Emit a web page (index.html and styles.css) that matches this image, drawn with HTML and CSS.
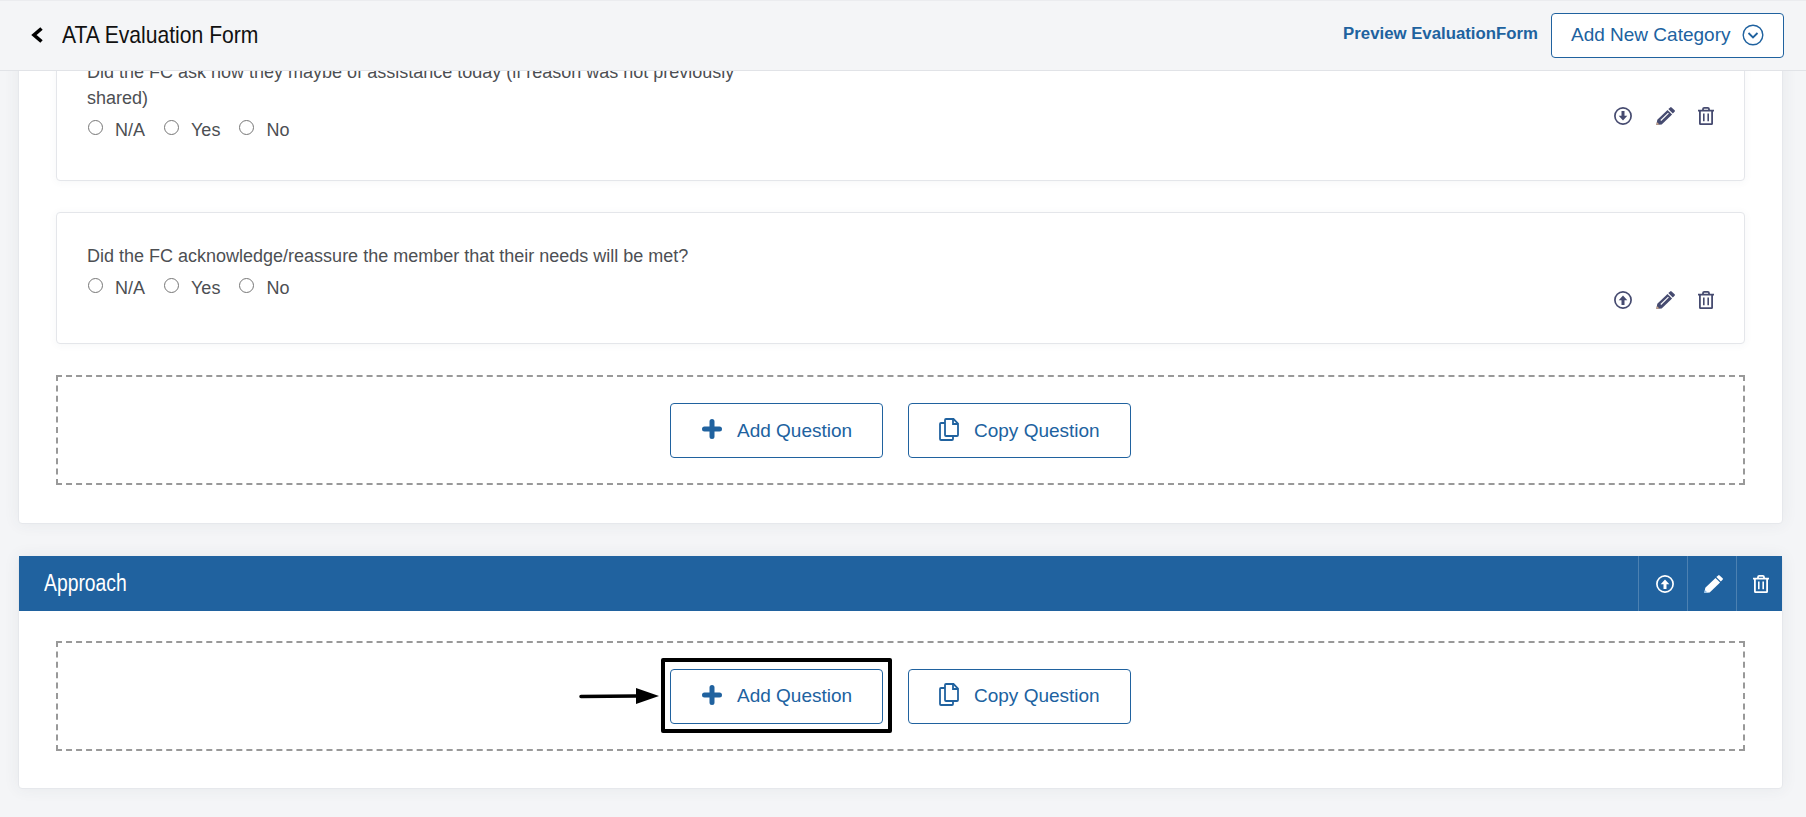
FILE: index.html
```html
<!DOCTYPE html>
<html lang="en">
<head>
<meta charset="utf-8">
<title>ATA Evaluation Form</title>
<link rel="stylesheet" href="styles.css">
</head>
<body>
<svg class="sprite" width="0" height="0" aria-hidden="true">
  <symbol id="i-down" viewBox="0 0 18 18"><circle cx="9" cy="9" r="8.100" fill="none" stroke="currentColor" stroke-width="1.700"/><path d="M7.500 4h3v4.700h2.800L9 13.500 4.700 8.700h2.800z" fill="currentColor"/></symbol>
  <symbol id="i-up" viewBox="0 0 18 18"><circle cx="9" cy="9" r="8.100" fill="none" stroke="currentColor" stroke-width="1.700"/><path d="M7.500 14h3V9.300h2.800L9 4.500 4.700 9.300h2.800z" fill="currentColor"/></symbol>
  <symbol id="i-pencil" viewBox="0 0 19 18"><path d="M14.200.4a1 1 0 0 1 1.400 0l3 2.900a1 1 0 0 1 0 1.400l-1.800 1.800-4.500-4.400z" fill="currentColor"/><path d="M11.500 3l4.600 4.500L5.700 17.500.3 18l1-5.200z" fill="currentColor"/><path d="M12 5.700L4.400 13.100l.8.800 7.600-7.400z" fill="var(--pencil-line)"/><path d="M.3 18l.5-3 2.700 2.600z" fill="var(--pencil-tip)"/></symbol>
  <symbol id="i-trash" viewBox="0 0 16 18"><path d="M0 3.700h16M5 3.500V2a1.200 1.200 0 0 1 1.200-1.100h3.600A1.200 1.200 0 0 1 11 2v1.500M1.900 3.700v12.700c0 .5.400.8.800.8h10.600c.4 0 .8-.3.8-.8V3.700" fill="none" stroke="currentColor" stroke-width="1.800"/><path d="M5.800 6.500v7.800M10.200 6.500v7.800" fill="none" stroke="currentColor" stroke-width="1.600"/></symbol>
  <symbol id="i-plus" viewBox="0 0 20 20"><path d="M10 2.500v15M2.500 10h15" fill="none" stroke="currentColor" stroke-width="5" stroke-linecap="round"/></symbol>
  <symbol id="i-copy" viewBox="0 0 20 23"><path d="M7 1h7.500L19 5.500V17c0 .6-.4 1-1 1H7c-.6 0-1-.4-1-1V2c0-.6.4-1 1-1z" fill="#fff" stroke="currentColor" stroke-width="1.800"/><path d="M14 1v5h5" fill="none" stroke="currentColor" stroke-width="1.800"/><path d="M6 5H2c-.6 0-1 .4-1 1v15c0 .6.400 1 1 1h11c.6 0 1-.4 1-1v-3" fill="none" stroke="currentColor" stroke-width="1.800"/></symbol>
</svg>

<header class="topbar">
  <div class="topbar-left">
    <svg class="back" viewBox="0 0 12 16" aria-hidden="true"><path d="M10.500 1.500L3 8l7.500 6.500" fill="none" stroke="currentColor" stroke-width="3.600"/></svg>
    <h1 class="page-title">ATA Evaluation Form</h1>
  </div>
  <div class="topbar-right">
    <a class="preview-link">Preview EvaluationForm</a>
    <button class="btn btn-category"><span class="btn-category-label">Add New Category</span>
      <svg class="chev" viewBox="0 0 22 22" aria-hidden="true"><circle cx="11" cy="11" r="9.800" fill="none" stroke="currentColor" stroke-width="1.400"/><path d="M6.500 9l4.500 4.500L15.500 9" fill="none" stroke="currentColor" stroke-width="1.800"/></svg>
    </button>
  </div>
</header>

<main class="viewport">
  <div class="form">
    <section class="section">
      <div class="section-body">
        <article class="question question-long">
          <div class="question-main">
            <p class="question-text">Did the FC ask how they maybe of assistance today (if reason was not previously shared)</p>
            <div class="options">
              <label class="option"><input type="radio" name="q1">N/A</label>
              <label class="option"><input type="radio" name="q1">Yes</label>
              <label class="option"><input type="radio" name="q1">No</label>
            </div>
          </div>
          <div class="actions">
            <svg class="ic ic-circle"><use href="#i-down"/></svg>
            <svg class="ic ic-pencil"><use href="#i-pencil"/></svg>
            <svg class="ic ic-trash"><use href="#i-trash"/></svg>
          </div>
        </article>
        <article class="question">
          <div class="question-main">
            <p class="question-text">Did the FC acknowledge/reassure the member that their needs will be met?</p>
            <div class="options">
              <label class="option"><input type="radio" name="q2">N/A</label>
              <label class="option"><input type="radio" name="q2">Yes</label>
              <label class="option"><input type="radio" name="q2">No</label>
            </div>
          </div>
          <div class="actions">
            <svg class="ic ic-circle"><use href="#i-up"/></svg>
            <svg class="ic ic-pencil"><use href="#i-pencil"/></svg>
            <svg class="ic ic-trash"><use href="#i-trash"/></svg>
          </div>
        </article>
        <div class="dropzone dropzone-offset">
          <button class="btn btn-add"><svg class="ic-plus"><use href="#i-plus"/></svg>Add Question</button>
          <button class="btn btn-copy"><svg class="ic-copy"><use href="#i-copy"/></svg>Copy Question</button>
        </div>
      </div>
    </section>

    <section class="section">
      <div class="section-head">
        <h2 class="section-title">Approach</h2>
        <div class="head-actions">
          <span class="head-cell"><svg class="ic ic-circle"><use href="#i-up"/></svg></span>
          <span class="head-cell"><svg class="ic ic-pencil"><use href="#i-pencil"/></svg></span>
          <span class="head-cell"><svg class="ic ic-trash"><use href="#i-trash"/></svg></span>
        </div>
      </div>
      <div class="section-body section-body-compact">
        <div class="dropzone">
          <span class="callout">
            <svg class="callout-arrow" viewBox="0 0 82 20" aria-hidden="true"><path d="M3 10.500L58 10" fill="none" stroke="#000" stroke-width="3.500" stroke-linecap="round"/><path d="M58 2l23 8-23 8z" fill="#000"/></svg>
            <button class="btn btn-add"><svg class="ic-plus"><use href="#i-plus"/></svg>Add Question</button>
          </span>
          <button class="btn btn-copy"><svg class="ic-copy"><use href="#i-copy"/></svg>Copy Question</button>
        </div>
      </div>
    </section>
  </div>
</main>
</body>
</html>
```
FILE: styles.css
```css
* { box-sizing: border-box; }
html, body { height: 100%; }
body {
  margin: 0;
  overflow: hidden;
  background: #f4f5f7;
  font-family: "Liberation Sans", Arial, sans-serif;
  color: #4d4f53;
  --pencil-line: #fff;
  --pencil-tip: #c9a58a;
}
.sprite { position: absolute; }

.topbar {
  position: relative;
  z-index: 2;
  height: 71px;
  display: flex;
  align-items: center;
  justify-content: space-between;
  padding: 0 22px 0 31px;
  background: #f4f5f7;
  border-top: 1px solid #ebecef;
  border-bottom: 1px solid #e1e3e7;
}
.topbar-left { display: flex; align-items: center; margin-top: -2px; }
.back { width: 12px; height: 16px; color: #000; margin-right: 19px; }
.page-title {
  margin: 0;
  font-weight: 400;
  font-size: 24px;
  color: #111;
  transform: scaleX(.88);
  transform-origin: left center;
}
.topbar-right { display: flex; align-items: center; }
.preview-link {
  font-size: 16.800px;
  font-weight: 700;
  color: #20629f;
  margin: -4px 13px 0 0;
}

.btn {
  display: inline-flex;
  align-items: center;
  background: #fff;
  border: 1px solid #20629f;
  border-radius: 4px;
  color: #20629f;
  font-family: "Liberation Sans", Arial, sans-serif;
  font-size: 19px;
  padding: 0;
}
.btn-category {
  width: 233px;
  height: 45px;
  padding: 0 0 2px 19px;
  justify-content: flex-start;
}
.chev { width: 22px; height: 22px; margin-left: 12px; }

.viewport { height: 746px; overflow: hidden; padding: 0 23px 0 18px; }
.form { margin-top: -75px; display: flex; flex-direction: column; gap: 32px; }
.section {
  background: #fff;
  border: 1px solid #e6e8ec;
  border-radius: 4px;
  box-shadow: 0 0 16px rgba(60, 70, 90, .07);
}
.section-body {
  padding: 31px 37px 38px;
  display: flex;
  flex-direction: column;
  gap: 31px;
}
.section-body-compact { padding: 30px 37px 37px; }
.section-head {
  height: 55px;
  margin-top: -1px;
  background: #20629f;
  display: flex;
  align-items: stretch;
  justify-content: space-between;
  color: #fff;
  --pencil-line: #fff;
  --pencil-tip: #8fc0ea;
}
.section-title {
  margin: 0;
  padding-left: 25px;
  align-self: center;
  font-weight: 400;
  font-size: 23px;
  color: #fff;
  transform: scaleX(.84);
  transform-origin: 25px center;
}
.head-actions { display: flex; }
.head-cell {
  width: 49px;
  display: flex;
  align-items: center;
  justify-content: center;
  padding-left: 3px;
  border-left: 1px solid rgba(255, 255, 255, .2);
}
.head-cell:last-child { width: 46px; }

.question {
  display: flex;
  justify-content: space-between;
  align-items: flex-start;
  height: 132px;
  padding: 30px 30px 0 30px;
  background: #fff;
  border: 1px solid #e4e6ea;
  border-radius: 4px;
  box-shadow: 0 1px 8px rgba(60, 70, 90, .05);
}
.question-long { height: 153px; }
.question-main { width: 670px; }
.question-text {
  margin: 0;
  font-size: 18px;
  line-height: 26px;
  color: #4d4f53;
}
.options { display: flex; margin-top: 6px; gap: 19px; }
.option {
  display: flex;
  align-items: center;
  font-size: 18px;
  line-height: 26px;
  color: #4d4f53;
}
.option input {
  width: 15px;
  height: 15px;
  margin: -5px 12px 0 1px;
}
.option + .option input { margin-left: 0; }
.actions {
  display: flex;
  align-items: center;
  margin-top: 48px;
  color: #464b70;
}
.ic { display: block; }
.ic-circle { width: 18px; height: 18px; }
.ic-pencil { width: 19px; height: 18px; margin-left: 24px; }
.ic-trash { width: 16px; height: 18px; margin-left: 23px; }
.head-cell .ic { margin: 0; }

.dropzone {
  height: 110px;
  border: 2px dashed #999;
  display: flex;
  align-items: center;
  justify-content: center;
  gap: 25px;
}
.dropzone-offset { padding-top: 1px; }
.dropzone .btn { height: 55px; }
.btn-add { width: 213px; padding-left: 31px; }
.btn-copy { width: 223px; padding-left: 30px; }
.ic-plus { width: 20px; height: 20px; margin: -3px 15px 0 0; }
.ic-copy { width: 20px; height: 23px; margin: -3px 15px 0 0; }

.callout { position: relative; display: inline-flex; }
.callout::before {
  content: "";
  position: absolute;
  inset: -11px -9px -9px -9px;
  border: 4px solid #000;
  border-radius: 2px;
  pointer-events: none;
}
.callout-arrow {
  position: absolute;
  left: -92px;
  top: 17px;
  width: 82px;
  height: 20px;
}
```
